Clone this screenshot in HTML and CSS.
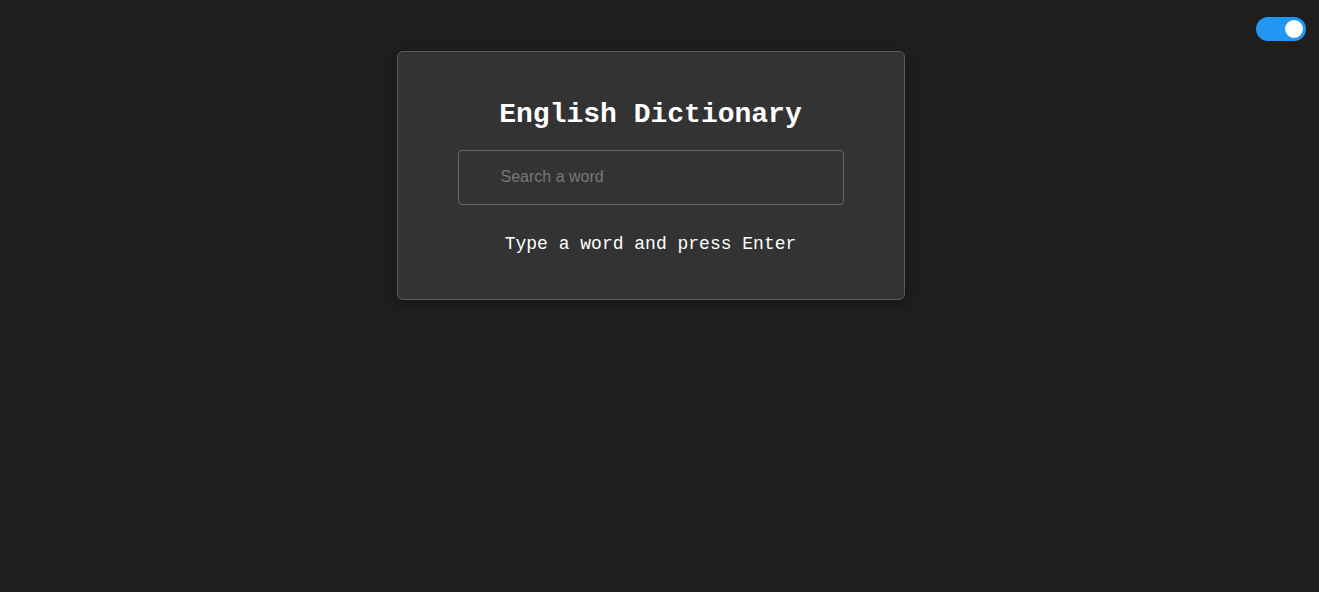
FILE: index.html
```html
<!DOCTYPE html>
<html lang="en">
<head>
<meta charset="utf-8">
<title>English Dictionary</title>
<link rel="stylesheet" href="styles.css">
</head>
<body>
<label class="toggle"><span class="knob"></span></label>
<div class="wrap">
  <div class="card">
    <h1 class="title">English Dictionary</h1>
    <input class="search" type="text" placeholder="Search a word">
    <p class="hint">Type a word and press Enter</p>
  </div>
</div>
</body>
</html>
```
FILE: styles.css
```css
html, body { margin: 0; padding: 0; }
body {
  background: #1e1e1e;
  min-height: 592px;
  font-family: "Courier New", "Liberation Mono", monospace;
  color: #fff;
}
.toggle {
  position: absolute;
  top: 17px;
  right: 13px;
  width: 50px;
  height: 24px;
  border-radius: 12px;
  background: #2196f3;
  display: block;
}
.knob {
  position: absolute;
  top: 3px;
  right: 3px;
  width: 18px;
  height: 18px;
  border-radius: 50%;
  background: #fff;
}
.wrap {
  display: flex;
  justify-content: center;
  padding: 51px 18px 0 0;
}
.card {
  width: 508px;
  box-sizing: border-box;
  background: #333333;
  border: 1px solid #5a5a5a;
  border-radius: 6px;
  padding: 47px 60px 44px;
  display: flex;
  flex-direction: column;
  align-items: center;
  box-shadow: 0 4px 12px rgba(0,0,0,0.35);
}
.title {
  margin: 0;
  font-size: 28px;
  line-height: 32px;
  font-weight: bold;
  color: #fff;
}
.search {
  margin-top: 19px;
  width: 100%;
  height: 55px;
  box-sizing: border-box;
  background: #333333;
  border: 1px solid #666;
  border-radius: 4px;
  padding: 0 12px 2px 42px;
  font-family: "Liberation Sans", Arial, sans-serif;
  font-size: 16px;
  color: #fff;
  outline: none;
}
.search::placeholder { color: #777; }
.hint {
  margin: 29px 0 0;
  font-size: 18px;
  line-height: 21px;
  color: #fff;
}
```
